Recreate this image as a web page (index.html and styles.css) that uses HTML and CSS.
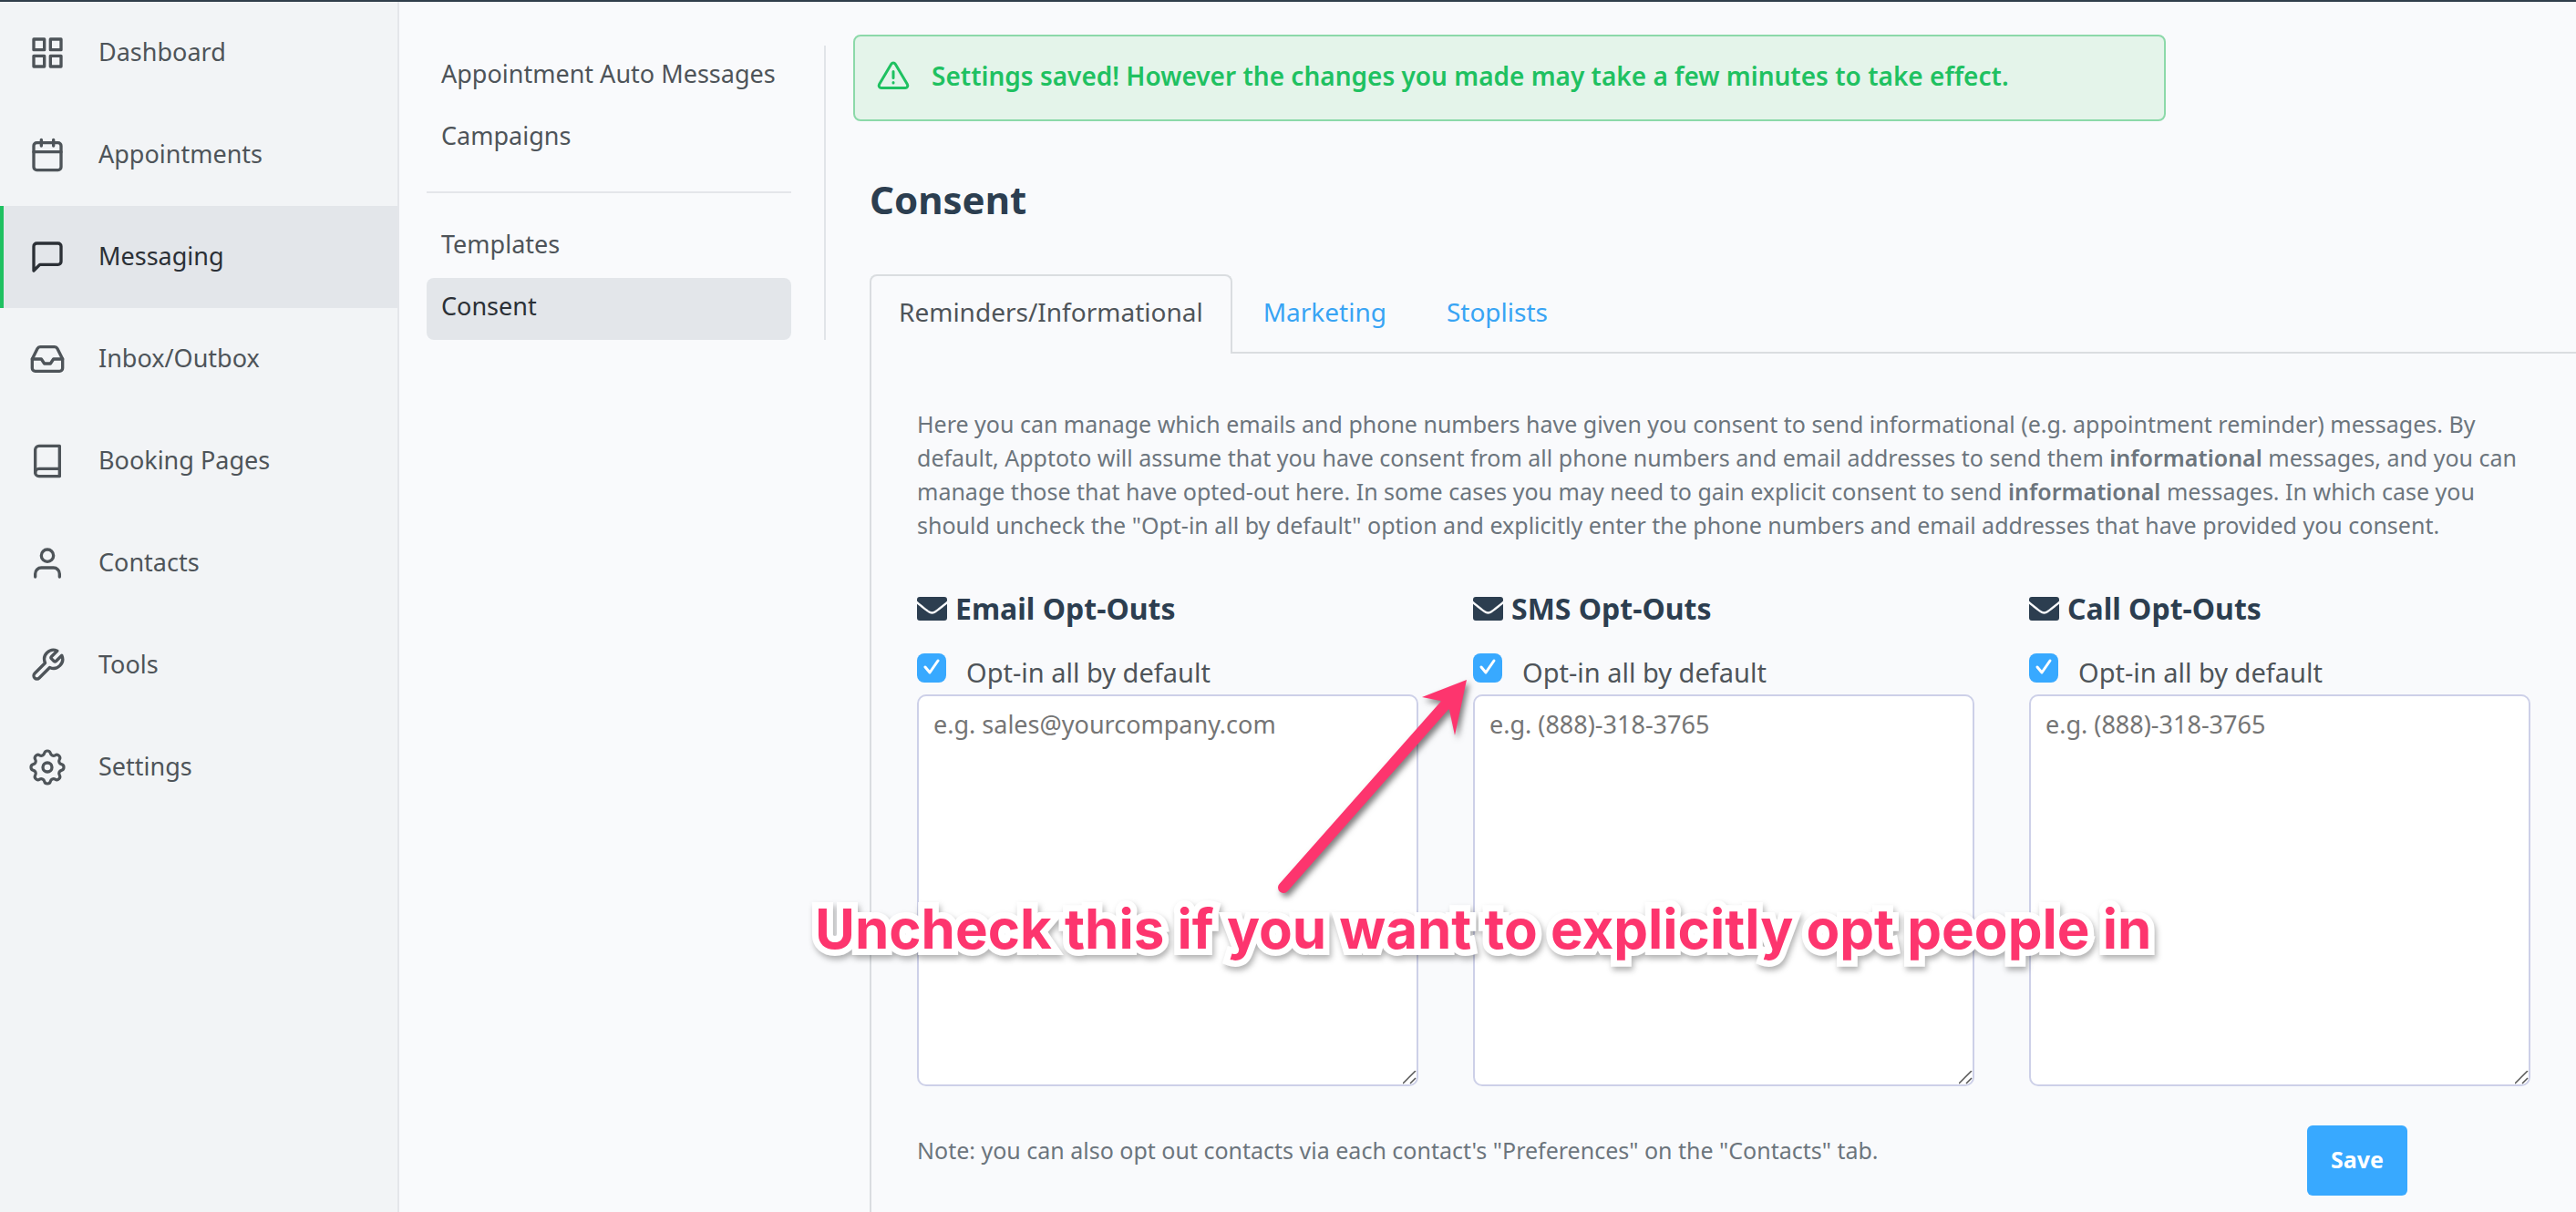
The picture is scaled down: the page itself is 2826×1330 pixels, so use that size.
FILE: index.html
```html
<!DOCTYPE html>
<html lang="en">
<head>
<meta charset="utf-8">
<meta name="viewport" content="width=device-width, initial-scale=1">
<title>Consent</title>
<link rel="stylesheet" href="styles.css">
</head>
<body>
<svg class="sprite" aria-hidden="true">
  <symbol id="envelope" viewBox="0 0 33 26">
    <path d="M3 0h27a3 3 0 0 1 3 3v1.500C29 8 22 13.600 19.500 15.300c-2 1.400-4 1.400-6 0C11 13.600 4 8 0 4.500V3a3 3 0 0 1 3-3z"/>
    <path d="M0 7.700C4 11 9.500 15.300 12 17c3 2.200 6 2.200 9 0 2.500-1.700 8-6 12-9.300V23a3 3 0 0 1-3 3H3a3 3 0 0 1-3-3z"/>
  </symbol>
</svg>
<div class="app">
  <nav class="sidebar" aria-label="Main">
    <a class="side-link" href="#">
      <svg class="side-icon" viewBox="0 0 24 24"><rect x="3" y="3" width="7" height="7"/><rect x="14" y="3" width="7" height="7"/><rect x="14" y="14" width="7" height="7"/><rect x="3" y="14" width="7" height="7"/></svg>
      <span class="side-label">Dashboard</span>
    </a>
    <a class="side-link" href="#">
      <svg class="side-icon" viewBox="0 0 24 24"><rect x="3" y="4" width="18" height="18" rx="2"/><path d="M16 2v4M8 2v4M3 10h18"/></svg>
      <span class="side-label">Appointments</span>
    </a>
    <a class="side-link active" href="#" aria-current="page">
      <svg class="side-icon" viewBox="0 0 24 24"><path d="M21 15a2 2 0 0 1-2 2H7l-4 4V5a2 2 0 0 1 2-2h14a2 2 0 0 1 2 2z"/></svg>
      <span class="side-label">Messaging</span>
    </a>
    <a class="side-link" href="#">
      <svg class="side-icon" viewBox="0 0 24 24"><path d="M22 12h-6l-2 3h-4l-2-3H2"/><path d="M5.450 5.110L2 12v6a2 2 0 0 0 2 2h16a2 2 0 0 0 2-2v-6l-3.450-6.890A2 2 0 0 0 16.760 4H7.240a2 2 0 0 0-1.790 1.110z"/></svg>
      <span class="side-label">Inbox/Outbox</span>
    </a>
    <a class="side-link" href="#">
      <svg class="side-icon" viewBox="0 0 24 24"><path d="M4 19.500A2.500 2.500 0 0 1 6.500 17H20"/><path d="M6.500 2H20v20H6.500A2.500 2.500 0 0 1 4 19.500v-15A2.500 2.500 0 0 1 6.500 2z"/></svg>
      <span class="side-label">Booking Pages</span>
    </a>
    <a class="side-link" href="#">
      <svg class="side-icon" viewBox="0 0 24 24"><path d="M20 21v-2a4 4 0 0 0-4-4H8a4 4 0 0 0-4 4v2"/><circle cx="12" cy="7" r="4"/></svg>
      <span class="side-label">Contacts</span>
    </a>
    <a class="side-link" href="#">
      <svg class="side-icon" viewBox="0 0 24 24"><path d="M14.700 6.300a1 1 0 0 0 0 1.400l1.600 1.600a1 1 0 0 0 1.400 0l3.770-3.770a6 6 0 0 1-7.940 7.940l-6.910 6.910a2.120 2.120 0 0 1-3-3l6.910-6.910a6 6 0 0 1 7.940-7.940l-3.760 3.760z"/></svg>
      <span class="side-label">Tools</span>
    </a>
    <a class="side-link" href="#">
      <svg class="side-icon" viewBox="0 0 24 24"><path class="cog" transform="translate(12 12) scale(1.2) translate(-12 -12)" d="M10.325 4.317c.426-1.756 2.924-1.756 3.350 0a1.724 1.724 0 0 0 2.573 1.066c1.543-.94 3.310.826 2.370 2.370a1.724 1.724 0 0 0 1.065 2.572c1.756.426 1.756 2.924 0 3.350a1.724 1.724 0 0 0-1.066 2.573c.94 1.543-.826 3.310-2.370 2.370a1.724 1.724 0 0 0-2.572 1.065c-.426 1.756-2.924 1.756-3.350 0a1.724 1.724 0 0 0-2.573-1.066c-1.543.94-3.310-.826-2.370-2.370a1.724 1.724 0 0 0-1.065-2.572c-1.756-.426-1.756-2.924 0-3.350a1.724 1.724 0 0 0 1.066-2.573c-.94-1.543.826-3.310 2.370-2.370.996.608 2.296.07 2.572-1.065z"/><circle cx="12" cy="12" r="3"/></svg>
      <span class="side-label">Settings</span>
    </a>
  </nav>

  <nav class="subnav" aria-label="Messaging">
    <a class="sub-link" href="#">Appointment Auto Messages</a>
    <a class="sub-link" href="#">Campaigns</a>
    <hr class="sub-divider">
    <a class="sub-link" href="#">Templates</a>
    <a class="sub-link active" href="#" aria-current="page">Consent</a>
  </nav>

  <main class="content">
    <div class="alert" role="status">
      <svg class="alert-icon" viewBox="0 0 36 32" aria-hidden="true"><path d="M15.800 3.200a2.600 2.600 0 0 1 4.400 0l13.200 22.400a2.600 2.600 0 0 1-2.200 3.900H4.800a2.600 2.600 0 0 1-2.200-3.900zM18 11.500v7M18 23.500v.5"/></svg>
      <span>Settings saved! However the changes you made may take a few minutes to take effect.</span>
    </div>

    <div class="section">
      <h1 class="title">Consent</h1>
      <ul class="tabs">
        <li><a class="tab active" href="#" aria-current="true">Reminders/Informational</a></li>
        <li><a class="tab" href="#">Marketing</a></li>
        <li><a class="tab" href="#">Stoplists</a></li>
      </ul>

      <form class="panel">
        <p class="intro">Here you can manage which emails and phone numbers have given you consent to send informational (e.g. appointment reminder) messages. By default, Apptoto will assume that you have consent from all phone numbers and email addresses to send them <strong>informational</strong> messages, and you can manage those that have opted-out here. In some cases you may need to gain explicit consent to send <strong>informational</strong> messages. In which case you should uncheck the "Opt-in all by default" option and explicitly enter the phone numbers and email addresses that have provided you consent.</p>

        <div class="columns">
          <section class="column">
            <h2 class="column-title"><svg class="mail"><use href="#envelope"/></svg><label for="email-list">Email Opt-Outs</label></h2>
            <div class="check-row"><input class="check" type="checkbox" id="email-all" checked><label for="email-all">Opt-in all by default</label></div>
            <textarea class="list" id="email-list" placeholder="e.g. sales@yourcompany.com"></textarea>
          </section>
          <section class="column">
            <h2 class="column-title"><svg class="mail"><use href="#envelope"/></svg><label for="sms-list">SMS Opt-Outs</label></h2>
            <div class="check-row"><input class="check" type="checkbox" id="sms-all" checked><label for="sms-all">Opt-in all by default</label></div>
            <textarea class="list" id="sms-list" placeholder="e.g. (888)-318-3765"></textarea>
          </section>
          <section class="column">
            <h2 class="column-title"><svg class="mail"><use href="#envelope"/></svg><label for="call-list">Call Opt-Outs</label></h2>
            <div class="check-row"><input class="check" type="checkbox" id="call-all" checked><label for="call-all">Opt-in all by default</label></div>
            <textarea class="list" id="call-list" placeholder="e.g. (888)-318-3765"></textarea>
          </section>

          <svg class="arrow" viewBox="0 0 240 260" aria-hidden="true"><path class="arrow-shaft" d="M18 243L195 43"/><path class="arrow-head" d="M219 15L170 34l20 4 10 10 6 28z"/></svg>
          <p class="callout">Uncheck this if you want to explicitly opt people in</p>
        </div>

        <div class="footer">
          <p class="note">Note: you can also opt out contacts via each contact's "Preferences" on the "Contacts" tab.</p>
          <div class="actions"><button class="save" type="submit">Save</button></div>
        </div>
      </form>
    </div>
  </main>
</div>
</body>
</html>
```

FILE: styles.css
```css
* {
  box-sizing: border-box;
}

body {
  margin: 0;
  background: #f9fafc;
  color: #4e5459;
  font-family: "Noto Sans", "Open Sans", sans-serif;
  font-size: 27px;
  line-height: 37px;
}

a {
  color: inherit;
  text-decoration: none;
}

h1, h2, p, ul {
  margin: 0;
}

strong {
  font-weight: 600;
}

.sprite {
  display: none;
}

.app {
  display: flex;
  min-height: 100vh;
  border-top: 2px solid #303e4b;
  overflow: hidden;
}

/* Main navigation */
.sidebar {
  flex: 0 0 438px;
  background: #f2f4f6;
  border-right: 2px solid #e4e6ea;
}

.side-link {
  display: flex;
  align-items: center;
  gap: 36px;
  height: 112px;
  padding-left: 28px;
  border-left: 4px solid transparent;
}

.side-link.active {
  background: #e3e6ea;
  border-left-color: #1fc161;
  color: #2b3036;
}

.side-icon {
  width: 40px;
  height: 40px;
  fill: none;
  stroke: currentColor;
  stroke-width: 2;
  stroke-linecap: round;
  stroke-linejoin: round;
}

.cog {
  stroke-width: 1.6;
}

.side-label {
  padding-bottom: 4px;
}

/* Section navigation */
.subnav {
  flex: 0 0 438px;
  align-self: flex-start;
  margin: 48px 0 0 30px;
  padding-right: 36px;
  border-right: 2px solid #e1e4e8;
}

.sub-link {
  display: block;
  padding: 12px 16px 19px;
  border-radius: 8px;
  white-space: nowrap;
}

.sub-link.active {
  background: #e3e6ea;
  color: #2b3036;
}

.sub-divider {
  height: 2px;
  margin: 24px 0 25px;
  border: 0;
  background: #e4e6ea;
}

/* Content */
.content {
  flex: 1;
  min-width: 0;
  display: flex;
  flex-direction: column;
  padding: 36px 0 0 30px;
}

.alert {
  display: flex;
  align-items: center;
  gap: 24px;
  max-width: 1440px;
  padding: 24px 24px 29px;
  border: 2px solid #8cd9a9;
  border-radius: 8px;
  background: #e4f4ea;
  color: #1fc161;
  font-size: 28px;
  font-weight: 600;
  line-height: 38px;
}

.alert-icon {
  width: 36px;
  height: 32px;
  fill: none;
  stroke: currentColor;
  stroke-width: 3;
  stroke-linecap: round;
  stroke-linejoin: round;
}

.section {
  flex: 1;
  display: flex;
  flex-direction: column;
  padding: 58px 0 0 18px;
}

.title {
  color: #2c3e50;
  font-size: 42px;
  font-weight: 700;
  line-height: 56px;
}

.tabs {
  display: flex;
  gap: 2px;
  margin-top: 54px;
  padding: 0;
  border-bottom: 2px solid #dadde0;
  list-style: none;
}

.tab {
  display: block;
  padding: 22px 30px 27px;
  border: 2px solid transparent;
  border-bottom: 0;
  color: #38a4f4;
  font-size: 28px;
  line-height: 34px;
}

.tab.active {
  margin-bottom: -2px;
  padding-bottom: 29px;
  border-color: #dadde0;
  border-radius: 8px 8px 0 0;
  background: #f9fafc;
  color: #4e5459;
}

.panel {
  flex: 1;
  padding: 59px 50px 18px;
  border-left: 2px solid #dadde0;
}

.intro,
.note {
  color: #6c757d;
  font-size: 25px;
}

.columns {
  position: relative;
  display: grid;
  grid-template-columns: repeat(3, 1fr);
  gap: 60px;
  margin-top: 51px;
}

.column {
  display: flex;
  flex-direction: column;
  min-width: 0;
}

.column-title {
  display: flex;
  align-items: center;
  gap: 9px;
  color: #2c3e50;
  font-size: 32px;
  font-weight: 700;
  line-height: 44px;
}

.mail {
  width: 33px;
  height: 26px;
  fill: currentColor;
}

.check-row {
  display: flex;
  align-items: flex-start;
  gap: 22px;
  margin-top: 27px;
  font-size: 29px;
  line-height: 42px;
}

.check {
  appearance: none;
  width: 32px;
  height: 32px;
  margin: 0;
  border: 1px solid #cdd0e8;
  border-radius: 8px;
  background: #fff;
}

.check:checked {
  border: 0;
  background: #38a9ff url("data:image/svg+xml,%3Csvg xmlns='http://www.w3.org/2000/svg' viewBox='0 0 32 32'%3E%3Cpath d='M9 15l5 6 9-13' fill='none' stroke='white' stroke-width='3' stroke-linecap='round' stroke-linejoin='round'/%3E%3C/svg%3E") center / 32px 32px no-repeat;
}

.list {
  width: 100%;
  height: 430px;
  margin-top: 3px;
  padding: 12px 16px;
  border: 2px solid #cdd0e8;
  border-radius: 10px;
  background: #fff;
  color: #4e5459;
  font: inherit;
  line-height: 38px;
  resize: vertical;
}

.list::placeholder {
  color: #757575;
}

.list::-webkit-resizer {
  background: url("data:image/svg+xml,%3Csvg xmlns='http://www.w3.org/2000/svg' viewBox='0 0 15 15'%3E%3Cpath d='M0 14L14 0M8 14l6-6' fill='none' stroke='%23555' stroke-width='1.500'/%3E%3C/svg%3E") center / 15px 15px no-repeat;
}

/* Callout drawn over the form */
.arrow {
  position: absolute;
  top: 85px;
  left: 384px;
  width: 240px;
  height: 260px;
  filter: drop-shadow(3px 4px 3px rgba(0, 0, 0, 0.5));
  pointer-events: none;
}

.arrow-shaft {
  stroke: #fd356e;
  stroke-width: 12;
  stroke-linecap: round;
}

.arrow-head {
  fill: #fd356e;
}

.callout {
  position: absolute;
  top: 337px;
  left: -112px;
  color: #fd356e;
  font-family: Inter, sans-serif;
  font-size: 60px;
  font-weight: 700;
  line-height: 72px;
  white-space: nowrap;
  -webkit-text-stroke: 14px #fff;
  paint-order: stroke fill;
  stroke-linejoin: round;
  filter: drop-shadow(2px 4px 3px rgba(0, 0, 0, 0.3));
  pointer-events: none;
}

.footer {
  display: grid;
  grid-template-columns: repeat(12, 1fr);
  gap: 60px;
  margin-top: 43px;
}

.note {
  grid-column: span 10;
  padding-top: 9px;
}

.actions {
  grid-column: span 2;
}

.save {
  padding: 19px 26px 21px;
  border: 0;
  border-radius: 6px;
  background: #38a9ff;
  color: #fff;
  font: inherit;
  font-size: 25px;
  font-weight: 700;
  line-height: 37px;
}
```
